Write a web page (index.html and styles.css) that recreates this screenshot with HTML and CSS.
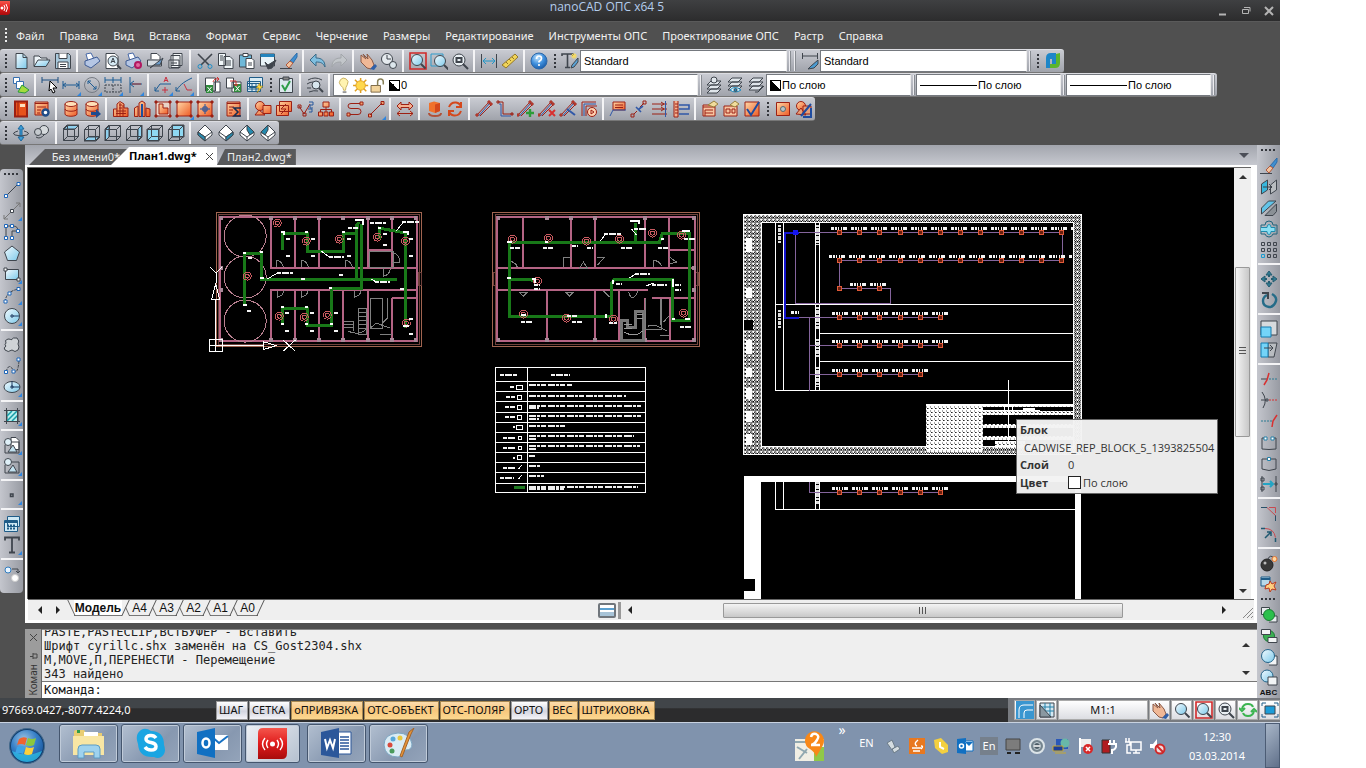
FILE: index.html
```html
<!DOCTYPE html>
<html lang="ru">
<head>
<meta charset="utf-8">
<title>nanoCAD ОПС x64 5</title>
<link rel="stylesheet" href="styles.css">
</head>
<body>
<svg class="defs" aria-hidden="true">
  <defs>
    <linearGradient id="gO" x1="0" y1="0" x2="1" y2="1"><stop offset="0" stop-color="#ffd8a8"/><stop offset="1" stop-color="#ee5a24"/></linearGradient>
    <linearGradient id="gC" x1="0" y1="0" x2="1" y2="1"><stop offset="0" stop-color="#f4fbff"/><stop offset="1" stop-color="#7cc9ea"/></linearGradient>
    <radialGradient id="gB" cx=".4" cy=".3" r=".8"><stop offset="0" stop-color="#bfe4ff"/><stop offset=".5" stop-color="#3f8fdc"/><stop offset="1" stop-color="#12509c"/></radialGradient>
    <linearGradient id="gR" x1="0" y1="0" x2="0" y2="1"><stop offset="0" stop-color="#f4564c"/><stop offset=".5" stop-color="#e01c1c"/><stop offset="1" stop-color="#a80c0c"/></linearGradient>
    <symbol id="cube" viewBox="0 0 18 18"><path d="M1.500 5.500h11v11h-11zM5.500 1.500h11v11h-11zM1.500 5.500l4-4M12.500 5.500l4-4M1.500 16.500l4-4M12.500 16.500l4-4"/></symbol>
    <symbol id="iso" viewBox="0 0 18 18"><path d="M9 1l7 7v3l-7 6-7-6V8z" fill="#fff"/><path d="M2 8l7 5 7-5M9 13v4"/></symbol>
    <symbol id="lens" viewBox="0 0 18 18"><circle cx="8" cy="8" r="5.500" fill="url(#gC)"/><path d="M12 12l4.500 4.500" stroke-width="2"/></symbol>
    <symbol id="hand" viewBox="0 0 18 18"><path d="M2 3l5 4-3-5 5 5-1-5 5 6 2 5-3 4-4-1-6-6z" fill="#f0b896" stroke="#8a5a48"/><path d="M11 17l5-5 2 2-3 4z" fill="#3060a8" stroke="none"/></symbol>
    <symbol id="brush" viewBox="0 0 18 18"><path d="M17 1l-7 8 3 2 4-6z" fill="#3f8fd0" stroke="#2a6cab"/><path d="M10 9l-4 4 3 3 4-5z" fill="#f0c4a0" stroke="#b0583c"/><path d="M0 16.500h12"/></symbol>
    <symbol id="cyl" viewBox="0 0 18 18"><path d="M2 4v10c0 3 12 3 12 0V4" fill="url(#gO)"/><ellipse cx="8" cy="4" rx="6" ry="2.500" fill="#ffe0b8"/><path d="M2 9c0 3 12 3 12 0"/></symbol>
    <symbol id="pipes" viewBox="0 0 18 18"><path d="M2 15L14 2M5 16L17 4" stroke="#a02018"/><path d="M3.500 16L15 3" stroke="#3058a8"/><path d="M1 14h2v2H1zM13 1h2v2h-2zM15 3h2v2h-2z" fill="#f08060" stroke="#a02018"/></symbol>
    <symbol id="layers" viewBox="0 0 18 18"><path d="M6 2h10l-4 4H2zM6 6h10l-4 4H2zM6 10h10l-4 4H2z" fill="#dfe5ea"/></symbol>
    <symbol id="sheet" viewBox="0 0 18 18"><path d="M4 1.500h7l4 4v11H4z" fill="url(#gC)"/><path d="M11 1.500v4h4"/></symbol>
    <symbol id="shapes" viewBox="0 0 18 18"><circle cx="5" cy="5" r="3.500" fill="#dff0f8"/><path d="M2 8v8h14V5H9" /><path d="M5 15l5-7 4 7z" fill="#c2e1ef"/></symbol>
  </defs>
</svg>
<div class="app">
<header class="title">
  <svg class="logo" viewBox="0 0 10 14"><path d="M0 0h10v11q0 3-3 3H0z" fill="url(#gR)"/><circle cx="2" cy="7" r="1.500" fill="#fff"/><path d="M4 4q2 3 0 6M6 3q3 4 0 8" fill="none" stroke="#fff"/></svg>
  <h1>nanoCAD ОПС x64 5</h1>
  <div class="win">
    <button aria-label="Свернуть"><svg viewBox="0 0 10 10"><path d="M1 8.500h7" stroke-width="2"/></svg></button>
    <button aria-label="Восстановить"><svg viewBox="0 0 10 10"><path d="M1.500 3.500h6v4h-6zM3 1.500h6v4"/></svg></button>
    <button aria-label="Закрыть"><svg viewBox="0 0 10 10"><path d="M1 1l8 8M9 1l-8 8" stroke-width="2"/></svg></button>
  </div>
</header>
<nav class="menu"><i class="grip"></i>
  <a href="#">Файл</a><a href="#">Правка</a><a href="#">Вид</a><a href="#">Вставка</a><a href="#">Формат</a><a href="#">Сервис</a><a href="#">Черчение</a><a href="#">Размеры</a><a href="#">Редактирование</a><a href="#">Инструменты ОПС</a><a href="#">Проектирование ОПС</a><a href="#">Растр</a><a href="#">Справка</a>
</nav>
<section class="bars">
<div class="bar"><i class="grip"></i>
  <button aria-label="Новый"><svg viewBox="0 0 18 18"><use href="#sheet"/></svg></button>
  <button aria-label="Открыть"><svg viewBox="0 0 18 18"><path d="M1 14V4h5l2 2h6v2" fill="#eef4f8"/><path d="M1 14.500L5 8h12l-4 6.500z" fill="url(#gC)"/></svg></button>
  <button aria-label="Сохранить"><svg viewBox="0 0 18 18"><path d="M1.500 1.500h13l2 2v13h-15z" fill="#a9c9dc"/><path d="M5 1.500v5h8v-5M4 16v-6h10v6M6 12.500h6M6 14.500h6" fill="#fff"/></svg></button>
  <i class="sep"></i>
  <button aria-label="Печать"><svg viewBox="0 0 18 18"><path d="M3 2l5-1 3 6-6 2z" fill="#fff" stroke="#4668a8"/><path d="M2 9l12-4 3 4-9 7-6-3z" fill="#b5c6e4" stroke="#3f5c94"/></svg></button>
  <button aria-label="Просмотр"><svg viewBox="0 0 18 18"><path d="M2 1.500h9l3 3v12H2z" fill="#fff"/><circle cx="9" cy="9" r="5" fill="#d5e9f3"/><path d="M13 13l4 4" stroke-width="2"/><path d="M7 11l2-5 2 5M8 9.500h2"/></svg></button>
  <button aria-label="Печать наборов"><svg viewBox="0 0 18 18"><path d="M3 2l5-1 3 6-6 2z" fill="#fff" stroke="#4668a8"/><path d="M1 9l12-4 3 4-9 7-6-3z" fill="#b5c6e4" stroke="#3f5c94"/><circle cx="13" cy="13" r="3" fill="#e06aa0" stroke="#b01860" stroke-width="2"/></svg></button>
  <button aria-label="Параметры печати"><svg viewBox="0 0 18 18"><path d="M5 7V1.500h6l3 3V8" fill="#fff"/><path d="M1.500 8h14v6h-14z" fill="#d6dde3"/><path d="M4 16L17 6l-3 7H8z" fill="#6b9bc8"/></svg></button>
  <button aria-label="Пакет"><svg viewBox="0 0 18 18"><path d="M6 1.500h9v12H6zM4 3.500h9v12H4zM2 8h10v8H2z" fill="#f2f5f7"/><path d="M4 11h6M4 13.500h6"/></svg></button>
  <i class="sep"></i>
  <button aria-label="Вырезать"><svg viewBox="0 0 18 18"><path d="M2 2l11 11M16 2L5 13" stroke-width="1.600"/><circle cx="4" cy="14.500" r="2" stroke="#2390c8"/><circle cx="14" cy="14.500" r="2" stroke="#2390c8"/></svg></button>
  <button aria-label="Копировать"><svg viewBox="0 0 18 18"><path d="M1.500 1.500h7v12h-7zM7 4.500h6l3 3v9H7z" fill="#f2f8fb"/><path d="M3 4h3M3 6h3M3 8h3M9 9h5M9 11h5M9 13h5"/></svg></button>
  <button aria-label="Вставить"><svg viewBox="0 0 18 18"><path d="M1.500 3h12v12h-12z" fill="#6fb8d8"/><path d="M5 1.500h5v3H5zM8 6.500h6l2 2v8H8z" fill="#fff"/><path d="M10 11h4M10 13h4"/></svg></button>
  <button aria-label="Свойства"><svg viewBox="0 0 18 18"><path d="M1.500 2h14v12h-14z" fill="#e8f3f8"/><path d="M1.500 3.500h14" stroke="#2384bd" stroke-width="3"/><path d="M6 10l3 3 8-5-4 8-4 1z" fill="#3f454d"/></svg></button>
  <button aria-label="Стереть"><svg viewBox="0 0 18 18"><use href="#brush"/></svg></button>
  <i class="sep"></i>
  <button aria-label="Отменить"><svg viewBox="0 0 18 18"><path d="M1 8l6-6v4c6 0 9 3 9 9-2-4-4-5-9-5v4z" fill="#7fbfe0" stroke="#3a6a88"/></svg></button>
  <button aria-label="Повторить"><svg viewBox="0 0 18 18"><path d="M17 8l-6-6v4c-6 0-9 3-9 9 2-4 4-5 9-5v4z" fill="#c2c6ca" stroke="#a2a6aa"/></svg></button>
  <i class="sep"></i>
  <button aria-label="Панорамирование"><svg viewBox="0 0 18 18"><use href="#hand"/></svg></button>
  <button aria-label="Масштаб реального времени"><svg viewBox="0 0 18 18"><circle cx="7" cy="7" r="5.500" fill="#e5eaee"/><path d="M7 3v4h4"/><circle cx="13" cy="13" r="3.500" fill="#dce6ec"/></svg></button>
  <i class="sep"></i>
  <button aria-label="Показать всё"><svg viewBox="0 0 18 18"><path d="M1 1h16v16H1z" stroke="#d02828" stroke-width="1.600"/><use href="#lens"/></svg></button>
  <button aria-label="Рамка"><svg viewBox="0 0 18 18"><path d="M1 2h12v12H1z" stroke="#2e9ccc"/><use href="#lens" x="2" y="1"/></svg></button>
  <button aria-label="Лист"><svg viewBox="0 0 18 18"><circle cx="8" cy="8" r="6" fill="#e9eff3"/><path d="M5.500 6h5v4h-5zM12 12l5 5" stroke-width="2"/></svg></button>
  <i class="sep"></i>
  <button aria-label="Расстояние"><svg viewBox="0 0 18 18"><path d="M1.500 2v14M16.500 2v14"/><path d="M3 9h12M6 6L3 9l3 3M12 6l3 3-3 3" stroke="#1f96c8"/></svg></button>
  <button aria-label="Линейка"><svg viewBox="0 0 18 18"><path d="M1 13L14 2l3 3L5 16z" fill="#f0d458" stroke="#93772a"/><path d="M5 10l2 2M8 7l2 2M11 5l2 2" stroke="#93772a"/></svg></button>
  <i class="sep"></i>
  <button aria-label="Справка"><svg viewBox="0 0 18 18"><circle cx="9" cy="9" r="8" fill="url(#gB)" stroke="#2c68aa"/><path d="M6.500 7q0-3 2.500-3t2.500 2.500q0 1.500-2.500 3v1M9 12v2" stroke="#fff" stroke-width="1.600"/></svg></button>
  <i class="grip"></i>
  <button aria-label="Стиль текста"><svg viewBox="0 0 18 18"><path d="M1 4V2h11v2M6.500 2v13M4 15.500h5" stroke-width="1.600"/><path d="M17 6l-6 7-1 3 3-1 4-5z" fill="#5aa2d4"/><path d="M13 1v6M10 4h6M11 2l4 4M15 2l-4 4" stroke="#ffdf50"/></svg></button>
  <select class="field" aria-label="Стиль текста"><option>Standard</option></select>
  <i class="stop"></i><i class="stop"></i>
  <button aria-label="Стиль размеров"><svg viewBox="0 0 18 18"><path d="M1.500 1v6M16.500 1v6M2 4h14"/><path d="M17 8l-7 6-3 3 6-1 4-4z" fill="#4a9ad0"/></svg></button>
  <select class="field" aria-label="Стиль размеров"><option>Standard</option></select>
  <i class="stop"></i><i class="grip"></i>
  <button aria-label="nanoCAD"><svg viewBox="0 0 18 18"><path d="M2 6q0-5 5-5h5v11H8V7H6v9H2z" fill="#1d86c8" stroke="none"/><path d="M12 2l4-1v10q0 5-5 5H6v-4h6z" fill="#5cb52c" stroke="none"/></svg></button>
</div>
<div class="bar"><i class="grip"></i>
  <button aria-label="Слои"><svg viewBox="0 0 18 18"><path d="M1.500 1.500h6v6h-6z" fill="#fff" stroke="#356fb0"/><path d="M4.500 5.500h7v7h-7z" fill="#fff" stroke="#356fb0"/><path d="M6 16l4-7 7 5-4 3z" fill="#a4dc3c" stroke="#2a9a3c"/></svg></button>
  <i class="sep"></i>
  <button aria-label="Выбор размера"><svg viewBox="0 0 18 18"><path d="M1 1v6M17 1v6M1 4h16" stroke="#1d4f80"/><path d="M9 5l7 7h-4l2 4-2 1-2-4-2 2z" fill="#fff" stroke="#000"/></svg></button>
  <button class="dd" aria-label="Линейный размер"><svg viewBox="0 0 18 18"><path d="M1 5v8M17 5v8M1 9h16M4 7L1 9l3 2M14 7l3 2-3 2" stroke="#1d5c94"/></svg></button>
  <button class="dd" aria-label="Диаметр"><svg viewBox="0 0 18 18"><circle cx="9" cy="9" r="7.500" stroke="#777c84"/><path d="M5 5l8 8M5 8V5h3M13 10v3h-3" stroke="#1d5c94"/></svg></button>
  <button class="dd" aria-label="Цепь размеров"><svg viewBox="0 0 18 18"><path d="M1 1v6M9 1v6M17 1v6M1 4h16" stroke="#1d5c94"/><path d="M1 9h16v7H1zM9 9v7" stroke-dasharray="2 1"/></svg></button>
  <button class="dd" aria-label="Ордината"><svg viewBox="0 0 18 18"><path d="M5 1v16M5 8h12M9 5L5 8l4 3"  stroke="#1d5c94"/><path d="M7 8h9" stroke="#a03030"/></svg></button>
  <i class="sep"></i>
  <button class="dd" aria-label="Выноска"><svg viewBox="0 0 18 18"><path d="M1 15l5-7h11M1 11v4h4" stroke="#1d5c94"/><path d="M10 6l2-5 2 5M11 4.500h2M11 11v6M8 14h6" stroke="#c83040"/></svg></button>
  <button class="dd" aria-label="Допуск"><svg viewBox="0 0 18 18"><path d="M1 15C4 10 8 6 17 2M1 11v4h4" stroke="#1d5c94"/><path d="M9 8l3 6h5" stroke="#c83040"/></svg></button>
  <i class="sep"></i>
  <button aria-label="Импорт таблицы"><svg viewBox="0 0 18 18"><path d="M1.500 2h10v13h-10zM10 6h6v10h-6z" fill="#fff"/><path d="M2 9h7v8H2z" fill="#2f8a3c" stroke="none"/><path d="M3.500 11l4 5M7.500 11l-4 5" stroke="#fff"/><path d="M9 6q1-4 6-3M13 1l2 2-2 2" stroke="#d03030"/></svg></button>
  <button aria-label="Экспорт таблицы"><svg viewBox="0 0 18 18"><path d="M1.500 2h7v10h-7zM7 6h9v10H7z" fill="#fff"/><path d="M9 8h7v8H9z" fill="#2f8a3c" stroke="none"/><path d="M10.500 10l4 5M14.500 10l-4 5" stroke="#fff"/><path d="M5 5h6v5M9 8l2 2 2-2" stroke="#d03030"/></svg></button>
  <button aria-label="Таблица"><svg viewBox="0 0 18 18"><path d="M3.500 1.500h13v10h-13zM1.500 5.500h13v10h-13z" fill="#d9ecf5" stroke="#1f5c88"/><path d="M2 7.500h12M2 10.500h12M2 13h12M6 8v7M10 8v7" stroke="#1f5c88"/><path d="M14 7l-4 5h3l-2 5 6-7h-3z" fill="#ffd840" stroke="#8a7420" stroke-width=".6"/></svg></button>
  <i class="grip"></i>
  <button aria-label="Проверка"><svg viewBox="0 0 18 18"><path d="M2.500 2.500h13v14h-13z" fill="#dce8ee"/><path d="M6 1h6v3H6z" fill="#888"/><path d="M5 9l3 5 5-9" stroke="#2d9c48" stroke-width="2"/></svg></button>
  <i class="sep"></i>
  <button aria-label="Поиск слоя"><svg viewBox="0 0 18 18"><path d="M2 4q7-4 14 0M1 8q3-2 6-2M1 12h4M3 16q5-2 9-1"/><circle cx="10" cy="9" r="4" fill="#d8e6ee"/><path d="M13 12l4 4" stroke-width="2"/></svg></button>
  <i class="sep"></i>
  <div class="field layer">
    <svg viewBox="0 0 54 18"><path d="M7 14q0-3-3-5a4.500 4.500 0 1 1 7-1q-2 3-2 6z" fill="#fff3b0" stroke="#c9b060"/><path d="M6 16h4" stroke="#999" stroke-width="2"/><path d="M25 1v16M17 9h16M19 3l12 12M31 3L19 15" stroke="#e0a020" stroke-width="1.600"/><circle cx="25" cy="9" r="5" fill="#ffd84c" stroke="#e0a020"/><path d="M36 9h10v7H36z" fill="#f2d49c" stroke="#7a6644"/><path d="M43 9V5q0-3 3-3t3 3v3" stroke="#888058" stroke-width="1.600"/></svg>
    <i class="chip"></i><select aria-label="Слой"><option>0</option></select>
  </div>
  <i class="stop"></i>
  <button aria-label="Слой объекта"><svg viewBox="0 0 18 18"><use href="#layers" y="3"/><circle cx="9" cy="4" r="3" fill="#dfe5ea"/></svg></button>
  <button aria-label="Показ слоя"><svg viewBox="0 0 18 18"><use href="#layers"/><path d="M4 14q5-5 11 0-6 4-11 0z" fill="#d8f2ff" stroke="#1a88bc"/><circle cx="9.500" cy="14" r="1.500" fill="#1a88bc"/></svg></button>
  <button aria-label="Предыдущий слой"><svg viewBox="0 0 18 18"><use href="#layers"/><path d="M17 10l-6 6H8"/></svg></button>
  <div class="field prop"><i class="chip"></i><select aria-label="Цвет"><option>По слою</option></select></div>
  <i class="stop"></i>
  <div class="field prop"><i class="rule"></i><select aria-label="Тип линии"><option>По слою</option></select></div>
  <i class="stop"></i>
  <div class="field prop"><i class="rule"></i><select aria-label="Вес линии"><option>По слою</option></select></div>
  <i class="stop"></i>
</div>
<div class="bar red"><i class="grip"></i>
  <button aria-label="Проект"><svg viewBox="0 0 18 18"><path d="M3 1.500h12v15H3z" fill="#e8521c" stroke-width="2"/><path d="M6 1v16" /><path d="M8 4h5v3H8z" fill="#ffe0c0" stroke="none"/></svg></button>
  <button aria-label="Настройки"><svg viewBox="0 0 18 18"><path d="M2 2h13v13H2z" fill="url(#gO)"/><path d="M2 3.500h13M4 7h9M4 10h4M4 13h3"/><circle cx="12.500" cy="12.500" r="3" fill="#fff" stroke="#204c88" stroke-width="2.400"/></svg></button>
  <i class="sep"></i>
  <button aria-label="База"><svg viewBox="0 0 18 18"><use href="#cyl" x="1"/></svg></button>
  <button aria-label="Экспорт базы"><svg viewBox="0 0 18 18"><use href="#cyl" x="1"/><path d="M8 12h5v-3l5 5-5 4v-3H8z" fill="#1d4a90" stroke="none"/></svg></button>
  <i class="sep"></i>
  <button aria-label="Здание"><svg viewBox="0 0 18 18"><path d="M1.500 16.500V9H5V4l3-2.500L12 4v4h4v8.500z" fill="url(#gO)"/><path d="M7 5h3M4 11h10M4 13.500h10M7 8h3M8 3v13M11 5v11M5 9v7"/></svg></button>
  <button aria-label="Этаж"><svg viewBox="0 0 18 18"><path d="M1.500 16.500V8L5 6v10.500zM13 16.500V8l4 1v7.500zM6 3l3-2 3 2v13.500H6z" fill="url(#gO)"/><path d="M9 4v13" stroke="#1c50a0" stroke-width="2"/></svg></button>
  <button aria-label="Контур помещения"><svg viewBox="0 0 18 18"><path d="M2 2h14v14H2z" fill="#e8d4c8"/><path d="M5 4h4v4h5v6H5z" fill="url(#gO)"/><path d="M1 1h2v2H1zM15 1h2v2h-2zM1 15h2v2H1zM15 15h2v2h-2z" fill="#8c2010"/></svg></button>
  <button class="dd" aria-label="Помещение"><svg viewBox="0 0 18 18"><path d="M2 2h14v14H2z" fill="url(#gO)"/><path d="M1 1h2v2H1zM15 1h2v2h-2zM1 15h2v2H1zM15 15h2v2h-2z" fill="#8c2010"/></svg></button>
  <button aria-label="Центр помещения"><svg viewBox="0 0 18 18"><path d="M2 2h14v14H2z" fill="url(#gO)"/><path d="M1 1h2v2H1zM15 1h2v2h-2zM1 15h2v2H1zM15 15h2v2h-2z" fill="#8c2010"/><path d="M9 4v10M4 9h10M7 7h4v4H7z" stroke="#1c50a0"/></svg></button>
  <i class="sep"></i>
  <button aria-label="Спецификация"><svg viewBox="0 0 18 18"><path d="M2 2h13v14H2z" fill="url(#gO)"/><path d="M2 3.500h13M4 7h5M4 10h4M4 13h3"/><path d="M16 8H9l4 4-4 4h7" stroke="#1b2f50" stroke-width="1.600"/></svg></button>
  <i class="sep"></i>
  <button aria-label="Условные знаки"><svg viewBox="0 0 18 18"><circle cx="6" cy="6" r="4.500" fill="url(#gO)"/><path d="M9 5.500h8v8H9zM1 15l4-5 6 5z" fill="url(#gO)"/></svg></button>
  <button aria-label="Извещатели"><svg viewBox="0 0 18 18"><path d="M4.500 1.500h12v10h-12zM1.500 5.500h12v10h-12z" fill="url(#gO)"/><path d="M11 4l-5 5h5l-5 5"/></svg></button>
  <button aria-label="Нумерация"><svg viewBox="0 0 18 18"><path d="M3 6l5 8 6-10M2 5h3v3H2zM7 13h3v3H7z"/><path d="M12 9h4v3h-3M13 2h4v3h-3v3h3" stroke="#28589c"/></svg></button>
  <button aria-label="Структура"><svg viewBox="0 0 18 18"><path d="M6 2h6v5H6zM1.500 12h4v4h-4zM7 12h4v4H7zM12.500 12h4v4h-4z" fill="url(#gO)"/><path d="M9 7v5M3.500 12V9.500h11V12"/></svg></button>
  <i class="sep"></i>
  <button aria-label="Шлейф"><svg viewBox="0 0 18 18"><path d="M15 3.500H5q-3 0-3 2.500t3 2.500h7q3 0 3 3t-3 3H3"/><path d="M14 2h3v3h-3zM1 13h3v3H1z" fill="#f0a070"/></svg></button>
  <button class="dd" aria-label="Линия связи"><svg viewBox="0 0 18 18"><path d="M3 15L15 3M1.500 14h3v3h-3zM14 1.500h3v3h-3z" fill="#f0a070"/></svg></button>
  <i class="sep"></i>
  <button aria-label="Зеркало"><svg viewBox="0 0 18 18"><path d="M1 6l4-4v2.500h8V2l4 4-4 4V7.500H5V10zM1 13.500h16M4 11l-3 2.500L4 16M14 11l3 2.500-3 2.500" fill="#f4b090"/></svg></button>
  <i class="sep"></i>
  <button aria-label="Модель"><svg viewBox="0 0 18 18"><path d="M4 3l5-1.500 6 1.500v8l-5 2-6-2z" fill="#f0722c" stroke="none"/><path d="M10 4.500l5-1.500v8l-5 2z" fill="#d4481c" stroke="none"/><path d="M4 13q0 3 6 3t6-3" stroke="#b05038" stroke-width="2"/></svg></button>
  <button aria-label="Обновить"><svg viewBox="0 0 18 18"><path d="M3 7q2-5 7-4.500 4 .5 5 4.500M15 2v5h-5M15 11q-2 5-7 4.500-4-.500-5-4.500M3 16v-5h5" stroke="#d4481c" stroke-width="2"/></svg></button>
  <i class="sep"></i>
  <button aria-label="Трасса"><svg viewBox="0 0 18 18"><use href="#pipes"/></svg></button>
  <button aria-label="Стояк"><svg viewBox="0 0 18 18"><path d="M2 2h5v12h10M1 1h2v2H1zM15 13h2v2h-2z"/><path d="M3 4h2v12h10" stroke="#3058a8"/></svg></button>
  <button aria-label="Добавить трассу"><svg viewBox="0 0 18 18"><use href="#pipes" x="-1"/><path d="M13 9v8M9 13h8" stroke="#2c9c38" stroke-width="2.400"/></svg></button>
  <button aria-label="Удалить трассу"><svg viewBox="0 0 18 18"><use href="#pipes" x="-1"/><path d="M11 10l6 6M17 10l-6 6" stroke="#d83030" stroke-width="2"/></svg></button>
  <button aria-label="Соединить"><svg viewBox="0 0 18 18"><use href="#pipes"/><path d="M8 9l8 6" stroke="#3058a8" stroke-width="2"/></svg></button>
  <button aria-label="Проложить"><svg viewBox="0 0 18 18"><path d="M2 16V2h14M6 16V6h11" stroke="#a02018"/><path d="M4 16V4h12" stroke="#3058a8"/><circle cx="12" cy="12" r="4.500" fill="#ffd0b0"/><path d="M11 10l3 2-3 2z"/></svg></button>
  <i class="sep"></i>
  <button aria-label="Полка"><svg viewBox="0 0 18 18"><path d="M4 2h12v8H4z" fill="url(#gO)"/><path d="M6 5h8M6 7.500h8"/><path d="M1 16l3-6h13" stroke="#3058a8"/></svg></button>
  <button aria-label="Разрыв"><svg viewBox="0 0 18 18"><path d="M1 14h3v3H1zM13 1h3v3h-3zM4 14l3-3M10 7l4-4"/><path d="M6 7l5 5M9 9l4-3" stroke="#3058a8" stroke-width="1.600"/></svg></button>
  <button aria-label="Выравнивание"><svg viewBox="0 0 18 18"><path d="M1 4h15M1 9h15M1 14h15M10 2l3 2-3 2M10 7l3 2-3 2"/><path d="M14.500 1v16" stroke="#3058a8"/></svg></button>
  <button aria-label="Уровень"><svg viewBox="0 0 18 18"><path d="M2 1v16h4V1M3 4h3M3 7h3M3 10h3M3 13h3" fill="#f4b090"/><path d="M7 5h10v4H7M7 14h10" stroke="#3058a8" stroke-width="1.600"/></svg></button>
  <i class="sep"></i>
  <button aria-label="Отчёт"><svg viewBox="0 0 18 18"><path d="M2 5h12v11H2z" fill="#f7c4a0"/><path d="M2 7h12M4 10h8M4 13h8M4 10v6" /><path d="M7 5l6-4 4 3-4 3z" fill="#f0dc9c" stroke="#98803c"/></svg></button>
  <button aria-label="Перечень"><svg viewBox="0 0 18 18"><path d="M2 6h13v10H2z" fill="#f7c4a0"/><path d="M4 9h4v4H4zM10 9h3v4h-3z"/><path d="M8 5l5-4 4 3-4 3z" fill="#f0dc9c" stroke="#98803c"/></svg></button>
  <button aria-label="Проверить"><svg viewBox="0 0 18 18"><path d="M2 2h14v14H2z" fill="url(#gO)"/><path d="M4 9l4 6 8-13" stroke="#1e4ca0" stroke-width="2"/></svg></button>
  <i class="grip"></i>
  <button aria-label="Зона"><svg viewBox="0 0 18 18"><path d="M2.500 2.500h13v13h-13z" fill="url(#gO)"/><circle cx="9" cy="9" r="2.500" fill="#b8c4c8" stroke="#5a6a70"/></svg></button>
  <button aria-label="Скрыть зоны"><svg viewBox="0 0 18 18"><circle cx="6" cy="6" r="4.500" fill="url(#gO)"/><path d="M1 14l5-6 5 7zM8 6h8v8H8z" fill="#e8a078"/><path d="M6 16L16 4M8 17h8V8" stroke="#1e4ca0" stroke-width="2"/></svg></button>
</div>
<div class="bar"><i class="grip"></i>
  <button aria-label="Орбита"><svg viewBox="0 0 18 18"><path d="M9 1l3 4h-2v8h2l-3 4-3-4h2V5H6z" fill="#3b9ed8" stroke="#20689c"/><path d="M6 7Q-1 9 3 11q6 2 12 0 4-2-3-4"/></svg></button>
  <button aria-label="Облёт"><svg viewBox="0 0 18 18"><circle cx="11" cy="6" r="4.500" fill="#d6dadd"/><circle cx="5" cy="8" r="3.500" fill="#c5cacf"/><path d="M3 13q4 3 9-3"/></svg></button>
  <i class="sep"></i>
  <button aria-label="Сверху"><svg viewBox="0 0 18 18"><path d="M1 5l4-4h12l-4 4z" fill="#8fd0ee"/><use href="#cube"/></svg></button>
  <button aria-label="Снизу"><svg viewBox="0 0 18 18"><path d="M1 17l4-4h12l-4 4z" fill="#8fd0ee"/><use href="#cube"/></svg></button>
  <button aria-label="Слева"><svg viewBox="0 0 18 18"><path d="M1 5l4-4v12l-4 4z" fill="#8fd0ee"/><use href="#cube"/></svg></button>
  <button aria-label="Справа"><svg viewBox="0 0 18 18"><path d="M13 5l4-4v12l-4 4z" fill="#8fd0ee"/><use href="#cube"/></svg></button>
  <button aria-label="Спереди"><svg viewBox="0 0 18 18"><path d="M1 5h12v12H1z" fill="#8fd8f2"/><use href="#cube"/></svg></button>
  <button aria-label="Сзади"><svg viewBox="0 0 18 18"><path d="M5 1h12v12H5z" fill="#8fd8f2"/><use href="#cube"/></svg></button>
  <i class="sep"></i>
  <button aria-label="ЮЗ изометрия"><svg viewBox="0 0 18 18"><use href="#iso"/><path d="M2 8l7 5v4l-7-6z" fill="#2589ad"/></svg></button>
  <button aria-label="ЮВ изометрия"><svg viewBox="0 0 18 18"><use href="#iso"/><path d="M16 8l-7 5v4l7-6z" fill="#2589ad"/></svg></button>
  <button aria-label="СВ изометрия"><svg viewBox="0 0 18 18"><use href="#iso"/><path d="M9 1l7 7-4 3-3-5z" fill="#2589ad"/></svg></button>
  <button aria-label="СЗ изометрия"><svg viewBox="0 0 18 18"><use href="#iso"/><path d="M9 1L2 8l4 3 3-5z" fill="#2589ad"/></svg></button>
</div>
</section>

<main class="work">
<div class="tools left"><i class="grip h"></i>
  <button aria-label="Отрезок"><svg viewBox="0 0 18 18"><path d="M3 15L15 3"/><path d="M1.500 13.500h3v3h-3zM14 1.500h3v3h-3z" fill="#fff" stroke="#1f66b8"/></svg></button>
  <button class="dd" aria-label="Прямая"><svg viewBox="0 0 18 18"><path d="M1 17L17 1M1 13v4h4M13 1h4v4" stroke="#777"/><path d="M7.500 7.500h3v3h-3z" fill="#fff"/></svg></button>
  <button aria-label="Полилиния"><svg viewBox="0 0 18 18"><path d="M3 15V3h7q5 0 5 5h-6v7"/><path d="M1.500 1.500h3v3h-3zM7.500 1.500h3v3h-3zM13.500 6.500h3v3h-3zM1.500 13.500h3v3h-3zM7.500 13.500h3v3h-3z" fill="#fff" stroke="#1f66b8"/></svg></button>
  <button aria-label="Многоугольник"><svg viewBox="0 0 18 18"><path d="M9 2l7.500 6-3 8.500h-9L1.500 8z" fill="url(#gC)"/></svg></button>
  <button class="dd" aria-label="Прямоугольник"><svg viewBox="0 0 18 18"><path d="M2.500 4.500h13v10h-13z" fill="url(#gC)"/><path d="M1 3h3v3H1zM14 13h3v3h-3z" fill="#fff"/></svg></button>
  <button class="dd" aria-label="Дуга"><svg viewBox="0 0 18 18"><path d="M2 16Q3 5 16 3" stroke-dasharray="3 1"/><path d="M1 14h3v3H1zM5 6h3v3H5zM14 1.500h3v3h-3z" fill="#fff" stroke="#1f66b8"/></svg></button>
  <button class="dd" aria-label="Окружность"><svg viewBox="0 0 18 18"><circle cx="9" cy="9" r="7.500" fill="url(#gC)"/><path d="M8 8h2v2H8zM10 9h6" stroke="#1f3a60"/></svg></button>
  <i class="sep h"></i>
  <button aria-label="Облако"><svg viewBox="0 0 18 18"><path d="M3 7q-2-3 2-4 3 0 3 1 2-3 6-2 3 3 1 6 2 3 0 6-3 3-6 0-4 3-7 0-2-2 1-4-2-1 0-3z" fill="#cfd3d7"/></svg></button>
  <button aria-label="Сплайн"><svg viewBox="0 0 18 18"><path d="M3 15q3-10 7-2 5 6 6-10" stroke-dasharray="3 1"/><path d="M1.500 13.500h3v3h-3zM9 13h3v3H9zM14 1h3v3h-3z" fill="#fff" stroke="#1f66b8"/></svg></button>
  <button class="dd" aria-label="Эллипс"><svg viewBox="0 0 18 18"><ellipse cx="9" cy="9" rx="8" ry="5.500" fill="url(#gC)"/><path d="M9 3v6h8M8 8h2v2H8z" stroke="#1f3a60"/></svg></button>
  <i class="sep h"></i>
  <button class="dd" aria-label="Штриховка"><svg viewBox="0 0 18 18"><path d="M4 3.500h11v11H4z" fill="#b6f0ee"/><path d="M4 9l5-5M4 14l10-10M9 14l6-6" stroke="#189ca8" stroke-width="1.500"/><path d="M1 3.500h16M1 14.500h16M3.500 1v16M14.500 1v16"/></svg></button>
  <i class="sep h"></i>
  <button class="dd" aria-label="Блок"><svg viewBox="0 0 18 18"><path d="M8 1.500h5l3 3v9H8z" fill="#fff"/><use href="#shapes" y="1"/></svg></button>
  <button class="dd" aria-label="Вставка блока"><svg viewBox="0 0 18 18"><use href="#shapes"/></svg></button>
  <i class="sep h"></i>
  <button class="dd" aria-label="Точка"><svg viewBox="0 0 18 18"><path d="M7.500 8h2.500v2.500H7.500z" stroke-width="1.500"/></svg></button>
  <i class="sep h"></i>
  <button aria-label="Таблица"><svg viewBox="0 0 18 18"><path d="M4.500 1.500h12v10h-12zM1.500 5.500h13v11h-13z" fill="#cfe9f5" stroke="#1f5c88"/><path d="M2 7h12" stroke="#1f5c88" stroke-width="2"/><path d="M4 10.500h8M4 13.500h8" stroke="#1f5c88" stroke-width="2" stroke-dasharray="2 1"/></svg></button>
  <button class="dd" aria-label="Текст"><svg viewBox="0 0 18 18"><path d="M2 4.500v-3h14v3M9 1.500v15M6 16.500h6" stroke-width="1.800"/></svg></button>
  <i class="sep h"></i>
  <button aria-label="Замена"><svg viewBox="0 0 18 18"><circle cx="5" cy="5" r="3" fill="#e8f4ff" stroke="#2f7cc0"/><circle cx="12" cy="13" r="3.500" fill="#fff" stroke="#ccc"/><path d="M9 4h6v4M13 6l2 2 2-2"/></svg></button>
</div>

<div class="center">
  <section class="doc">
    <div class="tabs">
      <button class="tab first">Без имени0*</button>
      <button class="tab on">План1.dwg*<svg viewBox="0 0 9 9"><path d="M1 1l7 7M8 1L1 8"/></svg></button>
      <button class="tab">План2.dwg*</button>
      <i class="drop"></i>
    </div>
    <div class="view">
      <div class="canvas">
      <svg class="cad" viewBox="29 168 1205 431" preserveAspectRatio="xMinYMin slice">
        <defs>
          <pattern id="hatch" width="4" height="4" patternUnits="userSpaceOnUse"><path d="M0 0h4v4H0z" fill="#fff"/><path d="M0 0h1v1H0zM2 0h1v1H2zM1 1h1v1H1zM3 1h1v1H3zM0 2h1v1H0zM2 2h1v1H2zM3 3h1v1H3z" fill="#000"/></pattern>
          <pattern id="dots" width="4" height="4" patternUnits="userSpaceOnUse"><path d="M0 0h4v4H0z" fill="#fff"/><path d="M0 0h1v1H0zM2 2h1v1H2zM3 0h1v1H3z" fill="#000"/></pattern>
          <g id="nd"><path d="M-2-2h4v4h-4z" fill="#6a2010" stroke="#e05a38"/></g>
          <g id="five"><use href="#nd"/><use href="#nd" x="20"/><use href="#nd" x="40"/><use href="#nd" x="61"/><use href="#nd" x="81"/></g>
          <g id="dev" fill="none" stroke="#c85a60"><circle r="4"/><circle r="2"/></g>
        </defs>
        <g class="outer"><path d="M217 212.500h205.500v133.500H217z"/><path d="M493.500 212.500h206v133.500h-206z"/></g>
        <g class="frame"><path d="M219 214.500h201.500v129.500H219zM419 272h3v13h-3z"/><path d="M496 214.500h201.500v129.500H496zM494 272h3v13h-3zM696 272h3v13h-3z"/></g>
        <g class="wall">
          <path d="M221 217h197v124H221zM271 268h147M271 290h147M272 217v51M296 217v51M320 217v51M369 217v51M393 217v51M272 290v51M296 290v51M320 290v51M344 290v51M369 290v51M393 298v43M369 250h24M393 298h25"/>
          <path d="M498 217h197v124H498zM498 268h197M498 290h150M524 217v51M572 217v51M596 217v51M645 217v51M669 217v51M548 290v51M596 290v51M620 290v51M645 298v43M670 298v43M669 250h26M652 298h43"/>
        </g>
        <g class="ring"><circle cx="246" cy="236" r="21"/><circle cx="246" cy="277" r="21"/><circle cx="246" cy="321" r="21"/></g>
        <path class="col" d="M221 218h3M270 218h4M294 218h4M318 218h4M342 218h4M367 218h4M391 218h4M415 218h3M221 340h3M270 340h4M294 340h4M318 340h4M342 340h4M367 340h4M391 340h4M415 340h3M221 268h3M221 290h3M498 218h3M546 218h4M570 218h4M594 218h4M643 218h4M692 218h4M498 340h3M546 340h4M594 340h4M643 340h4M692 340h4M692 268h4M692 290h4"/>
        <g class="gray"><path d="M277 267v-7q6 1 7 7M302 267v-7q6 1 7 7M346 267v-7q6 1 7 7M384 268v8q6-1 7-7M278 291v6q6-1 7-7M302 291v6q6-1 7-7M355 291v6q6-1 7-7M370 251h24v16h-24zM393 252q8 3 7 10h-7M345 321h9v10M345 324h9M345 327h9M359 308h8v26h-8zM359 312h8M359 316h8M359 320h8M359 324h8M359 328h8M349 331q10 5 18-2M371 298h12v30h-12zM383 298v28M388 298v20l-5 5M371 328l6-5 14 5M381 334h12"/><path d="M510 267v-6q6 1 8 6M564 267v-10h8M580 268l4-6 4 6zM598 257h7l-7 8M654 267v-7q6 1 8 6M670 257l7 5-7 2M520 292l4 4 4-4zM566 292l4 4 4-4zM604 291l6 6M629 292q4 12 10-2M646 299v30h16v-30M661 299v26M664 322l5-6M648 326l8-1 12 6M660 335h9"/></g>
        <path d="M622 320h6v7h8v-16h8v29h-22z" fill="none" stroke="#777" stroke-width="3"/>
        <path d="M625 324h7M625 328h7M637 314h6M637 318h6M625 332q10 6 18-1" stroke="#999" fill="none"/>
        <g class="green">
          <path d="M283 250v-17h25v18h36v-18h13l2-11M357 224v55M362 224v64h-30v37h-24v-17h-25v17M398 279H262v-26h-17v52M380 239v-11l26 5v95"/>
          <path d="M510 242h150l3-9h27v87h-17v-41h-58l-3 4v33H510zM510 279l24 1M636 241v-18"/>
        </g>
        <g>
          <use href="#dev" x="278" y="223"/><use href="#dev" x="307" y="241"/><use href="#dev" x="340" y="239"/><use href="#dev" x="378" y="237"/><use href="#dev" x="406" y="241"/><use href="#dev" x="248" y="276"/><use href="#dev" x="280" y="316"/><use href="#dev" x="305" y="317"/><use href="#dev" x="328" y="315"/><use href="#dev" x="407" y="323"/>
          <use href="#dev" x="513" y="239"/><use href="#dev" x="549" y="238"/><use href="#dev" x="587" y="241"/><use href="#dev" x="620" y="239"/><use href="#dev" x="653" y="233"/><use href="#dev" x="682" y="235"/><use href="#dev" x="538" y="281"/><use href="#dev" x="524" y="314"/><use href="#dev" x="567" y="318"/><use href="#dev" x="614" y="319"/><use href="#dev" x="684" y="313"/>
        </g>
        <path class="tag" d="M287 239h5M287 256h5M312 239h4M312 256h5M348 239h5M348 256h5M349 228h10M384 234h5M384 245h5M410 239h5M410 256h5M371 223h16M403 222h18M330 257h15M278 273h16M376 282h15M249 258h5M248 311h5M286 313h5M286 331h5M311 313h5M311 331h5M335 313h5M335 331h5M410 319h5M410 334h5M302 279h5M340 275h5M401 289h5M511 248h10M544 248h10M573 246h6M588 248h6M622 248h10M658 248h10M605 234h17M634 229h13M684 239h11M635 274h15M652 285h15M535 285h6M535 289h6M617 284h6M675 285h6M675 290h6M522 322h11M568 316h10M573 322h10M610 323h8M680 327h11"/>
        <path class="dot" d="M282 232h3v3M306 232h3M343 232h3M356 220h8v5M379 228h3M404 232h5v3M244 253h3M261 252h3M244 305h4M261 278h4M282 307h3M282 324h3M306 307h3M306 324h3M330 288h3M331 324h3M404 326h6M508 242h5M546 242h3M631 221h8v3M661 239h3M682 231h8M508 278h4M533 279h3v4M614 280v4M673 279v8M522 315h5M607 314v4M672 319h3M685 319h5"/>
        <path class="thin" d="M322 251l8 6M397 231l7-9M268 279l10-6M372 279l5 3M601 241l5-7M630 278l6-4M646 286l8-3M632 229l5 6"/>
        <g class="white">
          <path d="M210.500 339.500h13v12h-13zM210 345.500h54M216.500 351v-52M212.500 299l4-15 4 15zM264 341.500l13 4-13 4zM284 340l12 11M296 340l-12 11M211 267l6 6 6-6M217 273v10"/>
          <path d="M496.500 367.500h149v125h-149zM528.500 367.500v125M496.500 381.500h149M496.500 391.500h149M496.500 401.500h149M496.500 412.500h149M496.500 422.500h149M496.500 432.500h149M496.500 442.500h149M496.500 452.500h149M496.500 462.500h149M496.500 472.500h149M496.500 483.500h149"/>
          <path d="M517.500 385h6v4h-6zM518.500 395h4v4h-4zM518.500 405h4v4h-4zM518.500 415h4v4h-4zM517.500 425h6v4h-6zM519 436h3v3h-3zM519 446h3v3h-3zM518.500 455.500h4v4h-4zM519 469l3-4M519 479l3-4"/>
        </g>
        <path class="tag" d="M501 375h17M552 375h19M511 386.500h5M507 397h9M506 407h10M506 417h10M514 427h2M504 437.500h12M504 447.500h12M514 457.500h2M504 467.500h12M501 477.500h14"/>
        <path class="fine" d="M530 385h43M530 395.500h97M530 405.500h111M530 408h10M530 416h111M530 418.500h10M530 425.500h36M530 435.500h104M530 438.500h8M530 446h110M530 448.500h7M530 455.500h6M530 466h12M530 476h15M530 486.500h108M530 489h35"/>
        <path d="M515 487.500h11" stroke="#1f7a22" stroke-width="3"/>
        <path d="M743 214h338.500v240.500H743zM761.500 222v224.500h312V222z" fill="url(#hatch)" fill-rule="evenodd"/>
        <path d="M743 320h10v10h-10z" fill="#000"/>
        <path class="blob" d="M749 238v14M749 288v10M749 340v14M749 368v9M749 388v11M749 411v11M749 434v11"/>
        <path d="M926 404h57v48h-57zM983 404h90v3h-90zM983 411h90v4h-90zM983 424h90v4h-90zM983 436h90v4h-90zM995 441h30v7h-30z" fill="url(#dots)"/>
        <path d="M1023 408h12v3h-12z" fill="#fff"/>
        <g class="white"><path d="M743.500 214.500h338v240h-338zM761.500 222.500h312v224h-312zM775.500 222v168.500M783.500 222v168.500M815.500 222v168.500M819.500 222v168.500M775.500 304.500h298M819.500 333.500h254M819.500 361.500h254M775.500 390.500h298M926.500 404.500h147M1008.500 380v64M976 410.500h64M1004.500 406.500h8v8h-8z"/></g>
        <g class="violet"><path d="M797 232.500h265.500v28H840v28h50.500v15h-95v-71M797 317.500h146M809.500 317.500v73M809.500 345.500h132M809.500 374.500h112"/></g>
        <path class="blue" d="M795 232.500h-9.500v85h13M792 232.500h7M790 317.500h9"/>
        <path d="M793 230h5v5h-5z" fill="#1414f0"/>
        <path class="side" d="M779.500 225v18M779.500 310v18M817.500 225v20M817.500 307v22M817.500 339v18M817.500 367v20M817.500 482v22"/>
        <g><use href="#five" x="840" y="232.500"/><use href="#five" x="941" y="232.500"/><use href="#nd" x="1042" y="232.500"/><use href="#nd" x="1062" y="232.500"/><use href="#five" x="840" y="260.500"/><use href="#five" x="941" y="260.500"/><use href="#nd" x="1042" y="260.500"/><use href="#nd" x="1062" y="260.500"/><use href="#nd" x="840" y="288.500"/><use href="#nd" x="860" y="288.500"/><use href="#nd" x="880" y="288.500"/><use href="#five" x="840" y="317.500"/><use href="#nd" x="941" y="317.500"/><use href="#five" x="840" y="345.500"/><use href="#nd" x="941" y="345.500"/><use href="#five" x="840" y="374"/></g>
        <path class="name" d="M831 228.500h242M829 256.500h244M850 284.500h40M832 313h117M832 341.500h117M832 370h97M791 312.500h8"/>
        <path class="white" d="M775.500 482v27.500h300M783.500 482v27.500M815.500 482v27.500M819.500 482v27.500"/>
        <path d="M744 476h337.500v123h-6V482H761v117h-17v-8h11v-12h-11z" fill="#fff"/>
        <path class="violet" d="M809.500 482v10.500h132"/><use href="#five" x="840" y="492.500"/><use href="#nd" x="941" y="492.500"/><path class="name" d="M832 488.500h117"/>
      </svg>
      <dl class="tip">
        <dt>Блок</dt><dd class="wide">CADWISE_REP_BLOCK_5_1393825504</dd>
        <dt>Слой</dt><dd>0</dd>
        <dt>Цвет</dt><dd><i></i>По слою</dd>
      </dl>
      </div>
      <div class="vscroll"><button class="up" aria-label="Вверх"></button><i class="thumb"></i><button class="down" aria-label="Вниз"></button></div>
    </div>
    <div class="sheets">
      <button class="arr l" aria-label="Назад"></button><button class="arr r" aria-label="Вперёд"></button>
      <div class="sheetlist">
        <button class="on">Модель</button><button>A4</button><button>A3</button><button>A2</button><button>A1</button><button>A0</button>
      </div>
      <button class="list" aria-label="Список"></button><i class="split"></i>
      <div class="hscroll"><button class="arr l" aria-label="Влево"></button><i class="thumb"></i><button class="arr r" aria-label="Вправо"></button></div>
      <svg class="size" viewBox="0 0 12 12"><path d="M1 11L11 1M5 11l6-6M9 11l2-2"/></svg>
    </div>
  </section>
  <section class="cmd">
    <div class="side"><svg viewBox="0 0 9 9"><path d="M1 1l7 7M8 1L1 8"/></svg><svg viewBox="0 0 9 9"><path d="M1 6.500h3M4 3v6M4 4h4v4H4"/></svg><span>Коман</span></div>
    <div class="log">
      <pre>PASTE,PASTECLIP,ВСТБУФЕР - Вставить
Шрифт cyrillc.shx заменён на CS_Gost2304.shx
М,MOVE,П,ПЕРЕНЕСТИ - Перемещение
343 найдено</pre>
      <div class="vscroll small"><button class="up" aria-label="Вверх"></button><button class="down" aria-label="Вниз"></button></div>
    </div>
    <div class="prompt"><label for="c">Команда:</label><input id="c" type="text"></div>
  </section>
</div>

<div class="tools right"><i class="grip h"></i>
  <button aria-label="Стереть"><svg viewBox="0 0 18 18"><use href="#brush"/></svg></button>
  <button aria-label="Копия"><svg viewBox="0 0 18 18"><path d="M1.500 6l6-4v10l-6 4z" fill="#37b6dc"/><path d="M10.500 7l6-5v10l-6 4z" fill="#b8bcc0"/><path d="M3 9h9M9 6l3 3-3 3"/></svg></button>
  <button aria-label="Зеркало"><svg viewBox="0 0 18 18"><path d="M1.500 9l7-7H16L1.500 15z" fill="#62c4e8"/><path d="M16.500 5L5 16.500h8l3.500-4z" fill="#8a9096"/></svg></button>
  <button aria-label="Подобие"><svg viewBox="0 0 18 18"><path d="M1 5h4q0-4 4-4t4 4h4v9h-4q-1 3-4 3t-4-3H1z" stroke="#23647c"/><path d="M1 7.500h6q0-3 2-3t2 3h4v4h-4q0 3-2 3t-2-3H1" fill="#8be0f4" stroke="#1f8cae"/></svg></button>
  <button aria-label="Массив"><svg viewBox="0 0 18 18"><path d="M1.500 1.500h3v3h-3zM7.500 1.500h3v3h-3zM13.500 1.500h3v3h-3zM1.500 7.500h3v3h-3zM7.500 7.500h3v3h-3zM13.500 7.500h3v3h-3zM7.500 13.500h3v3h-3zM13.500 13.500h3v3h-3z"/><path d="M1.500 13.500h3v3h-3z" stroke="#1d9cd0"/></svg></button>
  <i class="sep h"></i>
  <button aria-label="Перенести"><svg viewBox="0 0 18 18"><path d="M9 1l3 4H6zM9 17l3-4H6zM1 9l4-3v6zM17 9l-4-3v6z" fill="#307a92" stroke="#245c70"/><path d="M9 5v2M9 11v2M5 9h2M11 9h2" stroke="#245c70" stroke-width="2"/></svg></button>
  <button aria-label="Повернуть"><svg viewBox="0 0 18 18"><path d="M12 3q5 3 4 7-2 6-7 6-6-1-6-6 0-4 4-6" stroke="#256c88" stroke-width="2.400"/><path d="M2 2h6v6" stroke-width="2"/></svg></button>
  <i class="sep h"></i>
  <button aria-label="Масштаб"><svg viewBox="0 0 18 18"><path d="M1 1h16v14H1z" fill="#d6dadd"/><path d="M1 7h10v10H1z" fill="#74d4f8" stroke="#147cb0"/></svg></button>
  <button aria-label="Растянуть"><svg viewBox="0 0 18 18"><path d="M8 2h9l-3 14H8z" fill="#b8bcc0"/><path d="M1 2h7v14H1z" fill="#74d4f8" stroke="#147cb0"/><path d="M4 7h9M10 4l3 3-3 3"/></svg></button>
  <i class="sep h"></i>
  <button aria-label="Обрезать"><svg viewBox="0 0 18 18"><path d="M1 9h6"/><path d="M9 9h8" stroke-dasharray="2 1" stroke="#2a7a92"/><path d="M9 3l-2 7-3 5" stroke="#d83030" stroke-width="1.500"/></svg></button>
  <button aria-label="Точка пересечения"><svg viewBox="0 0 18 18"><path d="M2 1q6 8 1 16M1 9h5M6 8h2v2H6z" /><path d="M9 9h8" stroke="#d83030" stroke-dasharray="2 1"/></svg></button>
  <button aria-label="Удлинить"><svg viewBox="0 0 18 18"><path d="M1 9h11" stroke="#2a7a92" stroke-dasharray="2 1"/><path d="M17 3l-4 6-1 6" stroke="#d83030" stroke-width="1.500"/></svg></button>
  <button aria-label="Разорвать"><svg viewBox="0 0 18 18"><path d="M4 5H2v11q7 1 14 0V5h-2"/><path d="M4 4h3v3H4zM11 4h3v3h-3z" fill="#fff" stroke="#2580a8"/></svg></button>
  <button aria-label="Разрыв в точке"><svg viewBox="0 0 18 18"><path d="M7 5H2v10q7 3 14 0V5h-5"/><path d="M7.500 3.500h3v3h-3z" fill="#fff" stroke="#2580a8"/></svg></button>
  <button aria-label="Соединить"><svg viewBox="0 0 18 18"><path d="M2 1v16M16 1v16M1 3h3v3H1zM1 12h3v3H1zM15 8h2v2h-2z"/><path d="M3 9h10M10 6l3 3-3 3" stroke="#23a4c4" stroke-width="2"/></svg></button>
  <i class="sep h"></i>
  <button aria-label="Фаска"><svg viewBox="0 0 18 18"><path d="M1 3.500h6M15.500 11v6" stroke="#2a5068"/><path d="M7 3.500l8.500 8M9 3.500h6.500V9" stroke="#c84a50"/></svg></button>
  <button aria-label="Сопряжение"><svg viewBox="0 0 18 18"><path d="M1 3.500h4M15.500 13v4M5 13l6-6M7 7h4v4" stroke="#1f5870" stroke-width="1.500"/><path d="M5 3.500q9 0 10.500 9" stroke="#c84a50"/></svg></button>
  <i class="sep h"></i>
  <button aria-label="Взорвать"><svg viewBox="0 0 18 18"><circle cx="7" cy="11" r="6" fill="#383838" stroke="#222"/><circle cx="5" cy="9" r="1.500" fill="#bbb" stroke="none"/><path d="M8 5q2-5 6-1"/><circle cx="14.500" cy="5" r="2.500" fill="#ffd8a0" stroke="#e07030"/></svg></button>
  <button aria-label="Разбить блок"><svg viewBox="0 0 18 18"><path d="M1 2h9v9H1z" fill="#b8d8e8" stroke="#1f5c88"/><path d="M1 4h9" stroke="#1f5c88" stroke-width="2"/><path d="M6 10l3-1 1-3 2 3 4-2-2 4 2 4-4-1-2 3-1-4-4 1z" fill="#ffd080" stroke="#b83820"/></svg></button>
  <i class="grip h"></i>
  <button aria-label="На передний план"><svg viewBox="0 0 18 18"><path d="M1.500 1.500h8v7h-8zM11 10h6v6h-8" fill="#e8ecee"/><circle cx="9" cy="9" r="5.500" fill="#2cc04c" stroke="#1b7a34"/></svg></button>
  <button aria-label="На задний план"><svg viewBox="0 0 18 18"><circle cx="9" cy="9" r="5.500" fill="#3cae54" stroke="#1b7a34"/><path d="M1.500 2.500h9v5h-9zM8 10.500h9v5H8z" fill="#f2f4f5"/></svg></button>
  <button aria-label="Перед объектом"><svg viewBox="0 0 18 18"><path d="M10 8h7v9H9" fill="#f2f4f5"/><circle cx="8" cy="8" r="6.500" fill="url(#gC)" stroke="#24648a"/></svg></button>
  <button aria-label="За объектом"><svg viewBox="0 0 18 18"><circle cx="7" cy="7" r="6" fill="url(#gC)" stroke="#24648a"/><path d="M8 8h9v8H8z" fill="#f2f4f5"/></svg></button>
  <button class="abc">ABC</button>
</div>
</main>

<footer class="status">
  <output>97669.0427,-8077.4224,0</output>
  <div class="modes"><button>ШАГ</button><button>СЕТКА</button><button class="on">оПРИВЯЗКА</button><button class="on">ОТС-ОБЪЕКТ</button><button class="on">ОТС-ПОЛЯР</button><button>ОРТО</button><button class="on">ВЕС</button><button class="on">ШТРИХОВКА</button></div>
  <div class="viewtools">
    <button aria-label="Вес линий"><svg viewBox="0 0 18 18"><path d="M0 0h18v18H0z" fill="#3a96d0" stroke="none"/><path d="M3 17V9q0-5 5-5h9M8 17v-5q0-3 3-3h6" stroke="#fff"/></svg></button>
    <button aria-label="Сетка листа"><svg viewBox="0 0 18 18"><path d="M2 2h14v14H2z" fill="#d4e8f2"/><path d="M2 6h14M2 10h14M7 2v14M12 2v14" stroke="#2580a8"/><path d="M2 4l11 12H2z" fill="#8a98a0"/></svg></button>
    <button class="scale">М1:1</button>
    <button aria-label="Рука"><svg viewBox="0 0 18 18"><use href="#hand"/></svg></button>
    <button aria-label="Лупа"><svg viewBox="0 0 18 18"><use href="#lens"/></svg></button>
    <button aria-label="Всё"><svg viewBox="0 0 18 18"><path d="M1 1h16v16H1z" stroke="#d02828" stroke-width="1.600"/><use href="#lens"/></svg></button>
    <button aria-label="По листу"><svg viewBox="0 0 18 18"><circle cx="8" cy="8" r="6" fill="#e9eff3"/><path d="M5.500 6h5v4h-5zM12 12l5 5" stroke-width="2"/></svg></button>
    <button aria-label="Регенерация"><svg viewBox="0 0 18 18"><path d="M3 8q1-5 6-5 4 0 5 3M15 10q-1 5-6 5-4 0-5-3M0 7l3 3 3-3M18 11l-3-3-3 3" stroke="#3cb450" stroke-width="2"/></svg></button>
    <button aria-label="Полный экран"><svg viewBox="0 0 18 18"><path d="M4 5h10v8H4z" fill="#1c9cd8"/><path d="M1 5V2h4M13 2h4v3M17 13v3h-4M5 16H1v-3" stroke="#1f5c88"/></svg></button>
  </div>
</footer>

<nav class="taskbar">
  <button class="start" aria-label="Пуск"><svg viewBox="0 0 38 38"><circle cx="19" cy="19" r="17.500" fill="#123f70" stroke="#446a8c"/><circle cx="19" cy="19" r="16" fill="url(#gB)" opacity=".8"/><path d="M4 24q15 7 30 0-4 11-15 11T4 24z" fill="#2ec4e8" opacity=".7"/><path d="M11 12q4-3 8-1l-2 7q-4-2-8 0z" fill="#f06430"/><path d="M20 11q4 2 8 0l-2 7q-4 2-8 0z" fill="#8cc83c"/><path d="M9 20q4-2 8 0l-2 7q-4-2-8 0z" fill="#3ca4e8"/><path d="M18 20q4 2 8 0l-2 7q-4 2-8 0z" fill="#fcd03c"/></svg></button>
  <div class="apps">
  <button aria-label="Проводник"><svg viewBox="0 0 34 32"><path d="M2 4q0-2 2-2h8l2 3h16v21H2z" fill="#e9cd72"/><path d="M5 2h3v3H5z" fill="#2f9c48"/><path d="M12 4h14v4H12z" fill="#fff"/><path d="M1 8h31v19H1z" fill="#f8e6a4"/><path d="M6 30V21q0-4 4-4h14q4 0 4 4v9h-6v-6H12v6z" fill="#9ed2ee" stroke="#5c9cc4"/></svg></button>
  <button aria-label="Skype"><svg viewBox="0 0 34 32"><path d="M9 1q4-1 8 2 13 0 13 14 2 5 0 9-4 6-10 3Q5 30 4 16 0 5 9 1z" fill="#1aa5e2"/><path d="M22 10q-2-3-6-2.500-4 .5-4 3.500 0 2.500 5 3.500t5 4q0 3.500-5 3.500-4 0-6-3" fill="none" stroke="#fff" stroke-width="3.500"/></svg></button>
  <button aria-label="Outlook"><svg viewBox="0 0 34 32"><path d="M15 7h17v15H15z" fill="#fff"/><path d="M15 8l8 7 9-7" fill="none" stroke="#1872c4" stroke-width="2"/><path d="M1 4l18-4v30L1 26z" fill="#1170c2"/><ellipse cx="10" cy="15" rx="3.500" ry="4.500" fill="none" stroke="#fff" stroke-width="2.500"/></svg></button>
  <button class="cur" aria-label="nanoCAD ОПС"><svg viewBox="0 0 34 32"><path d="M2 5q0-5 5-5h24v25q0 6-5 6H2z" fill="url(#gR)"/><circle cx="16.500" cy="16" r="2.500" fill="#fff"/><path d="M12 12q-3 4 0 8M9 10q-5 6 0 12M21 12q3 4 0 8M24 10q5 6 0 12" fill="none" stroke="#fff" stroke-width="1.400"/></svg></button>
  <button class="word" aria-label="Word"><svg viewBox="0 0 34 32"><path d="M17 4h14v22H17z" fill="#fff" stroke="#2b579a"/><path d="M20 9h9M20 12h9M20 15h9M20 18h9M20 21h9" stroke="#2b579a" stroke-width="1.600"/><path d="M1 4l18-4v30L1 27z" fill="#2b579a"/><path d="M5 11l2 9 3-8 3 8 2-9" fill="none" stroke="#fff" stroke-width="2"/></svg></button>
  <button aria-label="Paint"><svg viewBox="0 0 34 32"><path d="M16 5Q2 6 2 17q1 12 14 12 4 0 4-4 0-3 4-3 6 0 6-6Q28 5 16 5z" fill="#d9ebf4" stroke="#7ca6c2"/><circle cx="8" cy="17" r="2.500" fill="#d84a3c"/><circle cx="11" cy="11" r="2.500" fill="#58a8d8"/><circle cx="18" cy="10" r="2.500" fill="#e8c840"/><circle cx="10" cy="23" r="2.500" fill="#4a9a5c"/><path d="M20 29L29 6l3-6-5 4-9 24z" fill="#e89438" stroke="#a0642c"/></svg></button>
  </div>
  <div class="tray">
    <svg class="gis" viewBox="0 0 32 34"><path d="M1 10h29v22H1z" fill="#f0eee4"/><path d="M20 18h10v14H20z" fill="#90c848"/><path d="M1 13h14M3 18l10 6M5 30l8-10" stroke="#90a8b0" stroke-width="2"/><path d="M11 12a9.500 9.500 0 1 1 18 4q-3 6-7 12-1-5-6-8-5-3-5-8z" fill="#f88818"/><path d="M17 8q1-4 5-3 4 2 1 6-3 5-6 5h9" fill="none" stroke="#fff" stroke-width="2.500"/></svg>
    <button class="more">»</button><span class="lang">EN</span>
    <div class="icons">
    <svg viewBox="0 0 18 18"><path d="M3 6l5-3 3 7-3 3zM8 12l6-3 2 3-6 4z" fill="#d4dce0" stroke="#6c7c88"/></svg>
    <svg viewBox="0 0 18 18"><path d="M1 1h16v16H1z" fill="#e87820"/><path d="M10 3Q5 7 9 9M4 11h9M5 14h7M13 9q3 0 0 3" stroke="#fff" stroke-width="1.400" fill="none"/></svg>
    <svg viewBox="0 0 18 18"><path d="M2 3l7-2 7 7v7l-6 2-7-6z" fill="#f4d040"/><path d="M8 5v5l4 2" stroke="#fff" stroke-width="2" fill="none"/></svg>
    <svg viewBox="0 0 18 18"><path d="M9 4h8v10H9z" fill="#fff" stroke="#1170c2"/><path d="M1 2l9-1v16l-9-1zM9 5l4 4 4-4" fill="#1170c2"/><circle cx="5.500" cy="9" r="2" fill="none" stroke="#fff" stroke-width="1.500"/></svg>
    <b class="en">En</b>
    <svg viewBox="0 0 18 18"><path d="M2 2h14v11H2z" fill="#7c7c7c" stroke="#444"/><path d="M3 16h4M11 16h5" stroke="#222" stroke-width="2"/></svg>
    <svg viewBox="0 0 18 18"><circle cx="9" cy="9" r="7" fill="#74848e" stroke="#dce4e8" stroke-width="2"/><circle cx="9" cy="9" r="3.500" fill="#4c5c66" stroke="#c8d4da"/><path d="M6 9h6" stroke="#fff" stroke-width="1.500"/></svg>
    <svg viewBox="0 0 18 18"><path d="M4 2h12v10H4z" fill="#2a58b8"/><circle cx="13" cy="6" r="4.500" fill="#68b8a8"/><path d="M1 9h10v5H1zM3 16h11" fill="#1c3e98" stroke="#c8a830"/></svg>
    <svg viewBox="0 0 18 18"><path d="M4 1v16" stroke="#fff" stroke-width="2"/><path d="M5 2h10v8H5z" fill="#eee"/><circle cx="12" cy="12" r="5" fill="#d82828"/><path d="M10 10l4 4M14 10l-4 4" stroke="#fff" stroke-width="1.600"/></svg>
    <svg viewBox="0 0 18 18"><path d="M2 3h8v13H2z" fill="#b01c20" stroke="#333"/><path d="M10 3v4M14 3v4M8 7h8v3q-1 3-4 3v4" stroke="#fff" fill="none" stroke-width="2"/></svg>
    <svg viewBox="0 0 18 18"><path d="M7 5h10v8H7zM9 16h7M12 13v3M2 1v4M5 1v4M1 5h5v3H3v8h4" fill="none" stroke="#fff" stroke-width="1.500"/></svg>
    <svg viewBox="0 0 18 18"><path d="M2 7h3l4-5v14l-4-5H2z" fill="#fff"/><circle cx="12" cy="12" r="4.500" fill="#f0dcdc" stroke="#d02828" stroke-width="2"/><path d="M9 9l6 6" stroke="#d02828" stroke-width="2"/></svg>
    </div>
    <time>12:30<br>03.03.2014</time>
    <button class="desk" aria-label="Показать рабочий стол"></button>
  </div>
</nav>
</div>
</body>
</html>
```
FILE: styles.css
```css
* { box-sizing: border-box; }
body { margin: 0; background: #fff; font: 11px/14px "Noto Sans", "Open Sans", sans-serif; color: #111; }
button, select, input { font: inherit; color: inherit; margin: 0; padding: 0; border: 0; background: none; border-radius: 0; }
select { appearance: none; }
button { flex: none; cursor: default; white-space: nowrap; }
a { color: inherit; text-decoration: none; }
svg { display: block; }
.defs { position: absolute; width: 0; height: 0; }

.app { display: flex; flex-direction: column; height: 100vh; margin-right: 86px; background: #505050; overflow: hidden; }

.title { display: flex; align-items: center; justify-content: space-between; height: 22px; flex: none; background: linear-gradient(#3f4042, #2c2c2d); border-bottom: 1px solid #5a5a5a; }
.title .logo { width: 10px; height: 14px; margin-bottom: 6px; }
.title h1 { margin: 0; padding: 0 14px 8px 0; font: 400 12px/16px "Open Sans", sans-serif; color: #b4cdec; }
.win { display: flex; gap: 13px; padding-right: 6px; }
.win svg { width: 10px; height: 10px; fill: none; stroke: #b4b4b4; stroke-width: 1; }

.menu { display: flex; align-items: center; gap: 15px; height: 27px; padding-left: 3px; flex: none; color: #f2f2f2; }
.menu .grip { margin: 0 -6px 0 2px; background: repeating-linear-gradient(#eee 0 2px, transparent 2px 4px); }

.bars { flex: none; }
.bar { display: flex; align-items: center; width: max-content; height: 24px; padding-right: 1px; border-radius: 3px; border-top: 1px solid #dcdde2; border-bottom: 1px solid #777; background: linear-gradient(#c9cbd2, #a0a3ab); }
.bar button, .tools button { position: relative; display: flex; align-items: center; justify-content: center; width: 21px; height: 21px; }
.bar svg, .tools svg, .viewtools svg { width: 18px; height: 18px; fill: none; stroke: #3f454d; stroke-width: 1; }
.bar.red svg { stroke: #9c2014; }
.dd::after { content: ""; position: absolute; right: 0; bottom: 0; border: 2px solid; border-color: transparent #2f86e0 #2f86e0 transparent; }
.grip { flex: none; width: 2px; height: 15px; margin: 0 3px 0 5px; background: repeating-linear-gradient(#33363c 0 2px, transparent 2px 4px); }
.grip.h { width: 15px; height: 2px; margin: 4px 0; background: repeating-linear-gradient(90deg, #33363c 0 2px, transparent 2px 4px); }
.sep { flex: none; width: 2px; height: 22px; margin: 0 3px; background: #f4f4f6; }
.sep.h { width: 22px; height: 2px; margin: 3px 0; }
.stop { flex: none; width: 2px; height: 20px; margin: 0 1px 0 2px; background: #ececf0; border-right: 1px solid #888c92; }
.stop + .stop { margin-right: 3px; }
.field { width: 207px; height: 22px; padding: 2px 3px; background: #fff; border: 1px solid #75797f; border-right-color: #eee; font: 11px/16px "Liberation Sans", Arial, sans-serif; color: #000; }
div.field { display: flex; align-items: center; gap: 1px; }
.field select { flex: 1; min-width: 0; }
.field.layer { width: 365px; }
.bar .layer svg { width: 51px; height: 17px; }
.field.prop { width: 145px; }
.chip { flex: none; width: 11px; height: 11px; border: 1px solid #000; background: linear-gradient(45deg, #000 50%, #fff 50%); }
.rule { width: 57px; height: 1px; background: #000; }

.work { display: flex; flex: 1; min-height: 0; }
.tools { display: flex; flex-direction: column; align-items: center; flex: none; width: 23px; overflow: hidden; background: linear-gradient(90deg, #c4c6cd, #989ba3); }
.tools.left { align-self: flex-start; margin: 24px 1px 0 0; padding-bottom: 9px; border-radius: 4px; }
.tools .abc { width: 23px; height: 10px; font: bold 8px/10px "Liberation Sans", sans-serif; }

.center { display: flex; flex-direction: column; flex: 1; min-width: 0; margin-left: 1px; }
.doc { display: flex; flex-direction: column; flex: 1; min-height: 0; background: #fff; }
.tabs { display: flex; align-items: flex-end; height: 20px; flex: none; padding-left: 4px; background: linear-gradient(#a2a5ad, #c6c8cf); }
.tab { height: 16px; padding: 0 4px 0 10px; background: #58595b; color: #eee; clip-path: polygon(8px 0, 100% 0, 100% 100%, 0 100%); }
.tab.first { width: 98px; padding: 0 4px 0 20px; clip-path: polygon(16px 0, 100% 0, 100% 100%, 0 100%); }
.tab.on { display: flex; align-items: center; gap: 8px; width: 106px; height: 18px; margin-left: -16px; padding: 0 5px 0 18px; background: #fff; color: #000; font-weight: 700; clip-path: polygon(18px 0, 100% 0, 100% 100%, 0 100%); }
.tab svg, .side svg { flex: none; width: 9px; height: 9px; fill: none; stroke: #444; }
.drop { margin: 0 8px 7px auto; border: 5px solid transparent; border-top-color: #4c4f58; border-bottom: 0; }
.view { display: flex; flex: 1; min-height: 0; margin: 2px 6px 0 2px; border: solid #666; border-width: 1px 0 0 1px; }
.canvas { position: relative; flex: 1; min-width: 0; background: #000; overflow: hidden; }
.cad { width: 100%; height: 100%; shape-rendering: crispEdges; stroke-width: 1; }
.cad .outer { fill: none; stroke: #a06450; }
.cad .frame { fill: none; stroke: #70423c; }
.cad .wall { fill: none; stroke: #b46484; stroke-width: 2; }
.cad .ring { fill: none; stroke: #b88090; }
.cad .col { fill: none; stroke: #a88898; stroke-width: 4; }
.cad .gray { fill: none; stroke: #808080; }
.cad .green { fill: none; stroke: #187818; stroke-width: 3; }
.cad .tag { stroke: #f4f4f4; stroke-width: 2; stroke-dasharray: 4 1 7 1; }
.cad .fine { stroke: #eee; stroke-width: 2; stroke-dasharray: 7 1 3 1 5 2; }
.cad .dot, .cad .thin, .cad .white { fill: none; stroke: #fff; }
.cad .dot { stroke-width: 2; }
.cad .blob { stroke: #fff; stroke-width: 6; }
.cad .violet { fill: none; stroke: #84649c; }
.cad .blue { fill: none; stroke: #1414d0; stroke-width: 2; }
.cad .side { stroke: #ddd; stroke-width: 3; stroke-dasharray: 2 1 4 1; }
.cad .name { stroke: #f4f4f4; stroke-width: 3; stroke-dasharray: 3 1 2 1 1 2 1 1 4 4; }

.tip { position: absolute; left: 988px; top: 251px; display: grid; grid-template-columns: 47px auto; width: max-content; height: 75px; margin: 0; padding: 1px 3px 2px; border: 1px solid #666; background: rgba(243, 243, 243, .97); font: 11px/17px "Open Sans", sans-serif; color: #333; }
.tip dt { font-weight: 700; }
.tip dd { display: flex; align-items: center; gap: 2px; margin: 0; padding-left: 1px; }
.tip dt:first-child { grid-column: 1 / 3; }
.tip .wide { grid-column: 1 / 3; padding-left: 4px; }
.tip i { width: 13px; height: 13px; border: 1px solid #222; background: #fff; }

.vscroll { display: flex; flex-direction: column; justify-content: space-between; align-items: center; flex: none; width: 17px; background: #efefef; }
.vscroll .thumb { width: 15px; height: 170px; margin-top: -64px; border: 1px solid #999; border-radius: 1px; background: repeating-linear-gradient(#555 0 1px, transparent 1px 3px) center / 7px 9px no-repeat, linear-gradient(90deg, #f4f4f4, #c8c8c8); }
.up, .down { width: 15px; height: 17px; }
.up::before, .down::before { content: ""; display: block; width: 0; margin: 0 auto; border: 4px solid transparent; border-top-width: 0; border-bottom-color: #333; }
.down::before { border-width: 4px 4px 0; border-top-color: #333; }
.sheets { display: flex; align-items: center; flex: none; height: 21px; margin: 0 3px 3px; padding-left: 3px; border-top: 1px solid #666; background: #efefef; font: 12px/14px "Liberation Sans", Arial, sans-serif; }
.arr { width: 18px; height: 17px; display: flex; align-items: center; justify-content: center; }
.arr::before { content: ""; border: 4px solid transparent; border-left-color: #222; border-right: 0; }
.arr.l::before { border-left: 0; border-right: 4px solid #222; }
.sheetlist { display: flex; align-self: flex-start; height: 16px; margin-left: 3px; }
.sheetlist button { position: relative; width: 27px; height: 16px; background: linear-gradient(#777, #777) 3px 100% / 21px 1px no-repeat; }
.sheetlist button::before { content: ""; position: absolute; left: 1px; top: 7px; width: 4px; height: 9px; border-left: 1px solid #666; transform: skewX(25deg); }
.sheetlist button::after { content: ""; position: absolute; right: 0; top: 0; width: 4px; height: 16px; border-right: 1px solid #555; transform: skewX(-25deg); }
.sheetlist .on { width: 56px; font-weight: 700; background: linear-gradient(#777, #777) 4px 100% / 48px 1px no-repeat, linear-gradient(#fff, #fff) 4px 0 / 48px 100% no-repeat; }
.sheetlist .on::before { top: 0; height: 16px; }
.list { width: 18px; height: 15px; margin-left: auto; border: 2px solid #70767c; border-radius: 2px; background: linear-gradient(#fff 25%, #5aa0d0 25% 50%, #fff 50% 60%, #a8c4d8 60%); }
.split { width: 3px; height: 17px; margin: 0 0 0 2px; background: #999; }
.hscroll { display: flex; align-items: center; justify-content: space-between; width: 612px; }
.hscroll .thumb { width: 400px; height: 15px; margin-right: 8px; border: 1px solid #999; border-radius: 1px; background: repeating-linear-gradient(90deg, #555 0 1px, transparent 1px 3px) center / 8px 7px no-repeat, linear-gradient(#f4f4f4, #c8c8c8); }
.size { width: 12px; height: 12px; margin: 5px 0 0 9px; stroke: #888; }

.cmd { display: grid; grid-template-columns: 17px 1fr; grid-template-rows: 53px 16px; flex: none; margin-top: 6px; font: 12px/14px "DejaVu Sans Mono", "Liberation Mono", monospace; background: #efefef; }
.side { grid-row: 1 / 3; display: flex; flex-direction: column; align-items: center; gap: 8px; padding-top: 4px; background: #9c9c9c; border-right: 1px solid #666; }
.side span { margin-top: -3px; writing-mode: vertical-rl; transform: rotate(180deg); font: 10px/14px "Noto Sans", sans-serif; color: #333; }
.log { display: flex; align-items: flex-end; min-width: 0; overflow: hidden; border-top: 1px solid #888; border-bottom: 1px solid #777; }
.log pre { flex: 1; margin: 0; padding-left: 2px; font: inherit; color: #222; }
.vscroll.small { align-self: stretch; width: 22px; padding: 6px 0 0; }
.prompt { display: flex; padding-left: 2px; background: #fff; line-height: 16px; }
.prompt input { flex: 1; outline: 0; }

.status { display: flex; align-items: center; flex: none; height: 24px; background: linear-gradient(#414549 40%, #2c2c2d 45%); color: #fff; }
.status output { width: 216px; padding-left: 2px; }
.modes { display: flex; gap: 1px; color: #111; }
.modes button { height: 19px; padding: 0 4px 0 2px; border: 1px solid #999; background: linear-gradient(#fff, #d4d6e0 55%, #f4f4f8); }
.modes .on { border-color: #a88850; background: linear-gradient(#fbdcae, #f8c67c 50%, #fcd890); }
.viewtools { display: flex; align-items: center; gap: 1px; height: 24px; margin-left: auto; padding-left: 6px; background: #787b80; color: #111; }
.viewtools button { display: flex; align-items: center; justify-content: center; width: 21px; height: 20px; border: 1px solid #aaa; background: linear-gradient(#fff, #dcdde2); }
.viewtools .scale { width: 90px; }

.taskbar { display: flex; align-items: center; flex: none; height: 46px; padding-left: 8px; border-top: 1px solid #c8d2e0; background: #8093ad; }
.start svg { width: 38px; height: 38px; }
.apps { display: flex; gap: 3px; margin: 0 0 4px 13px; }
.apps button { display: flex; align-items: center; justify-content: center; width: 59px; height: 39px; border: 1px solid #45566e; border-radius: 3px; background: linear-gradient(135deg, #b2bfd0, #8798b0 60%, #94a4ba); box-shadow: inset 0 0 0 1px #c0cbd9; }
.apps svg { width: 34px; height: 32px; }
.apps .cur { width: 55px; background: linear-gradient(135deg, #eef1f5, #b4c0cf); }
.apps .word { margin-left: 4px; }
.tray { display: flex; align-items: center; align-self: stretch; margin-left: auto; color: #fff; }
.gis { width: 32px; height: 34px; }
.more { align-self: flex-start; width: 20px; margin-left: 6px; font-size: 14px; }
.lang { width: 29px; margin-bottom: 6px; text-align: center; }
.icons { display: flex; gap: 6px; padding: 0 3px; }
.icons svg, .icons .en { width: 18px; height: 18px; }
.icons .en { background: #76808c; font-weight: 400; line-height: 18px; text-align: center; }
.tray time { width: 96px; font-size: 11px; line-height: 19px; text-align: center; }
.desk { width: 15px; height: 45px; border: 1px solid #4c5c74; background: linear-gradient(135deg, #a8b6c8, #60708a); }
```
